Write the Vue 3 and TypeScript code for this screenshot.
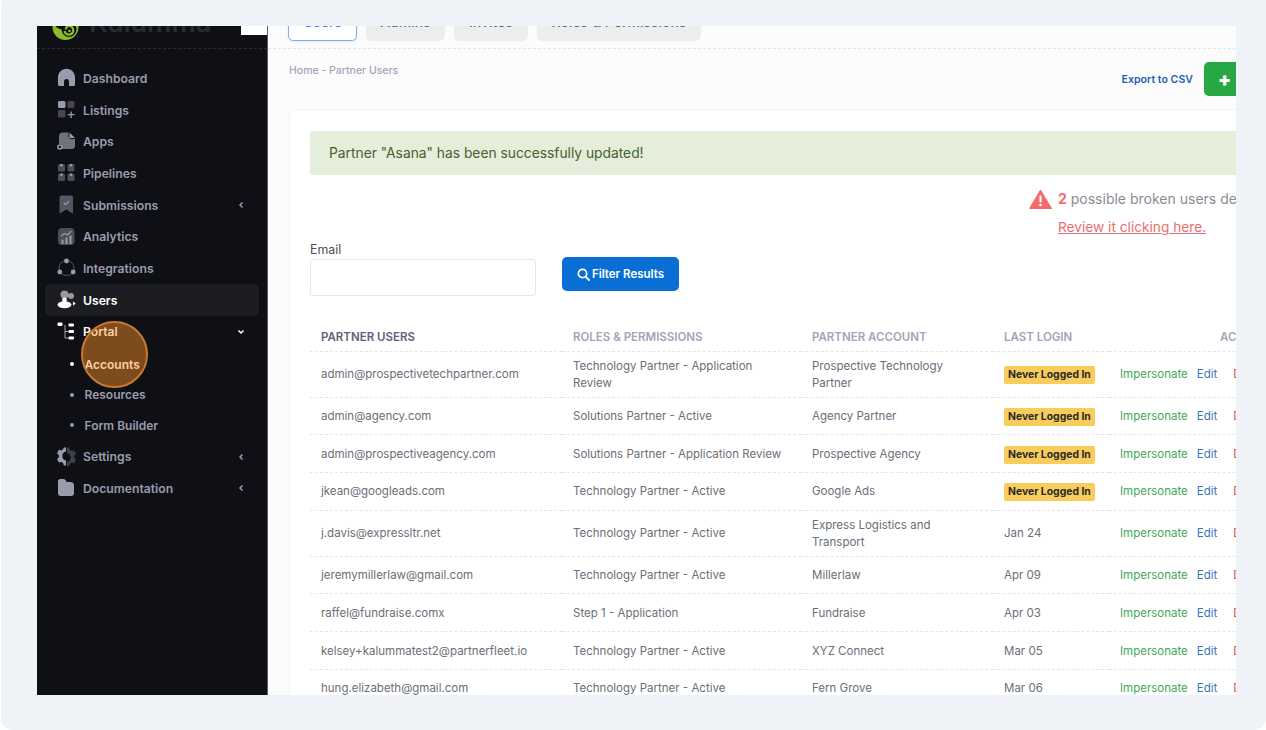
<script setup lang="ts">
interface NavItem { label: string; icon: string; chevron?: string; active?: boolean; white?: boolean; subs?: { label: string; white?: boolean }[] }
interface Row { email: string; role: string; account: string; login?: string }

const nav: NavItem[] = [
  { label: 'Dashboard', icon: 'home' },
  { label: 'Listings', icon: 'listings' },
  { label: 'Apps', icon: 'apps' },
  { label: 'Pipelines', icon: 'pipelines' },
  { label: 'Submissions', icon: 'submissions', chevron: 'left' },
  { label: 'Analytics', icon: 'analytics' },
  { label: 'Integrations', icon: 'integrations' },
  { label: 'Users', icon: 'users', active: true, white: true },
  { label: 'Portal', icon: 'portal', chevron: 'down', white: true, subs: [
    { label: 'Accounts', white: true }, { label: 'Resources' }, { label: 'Form Builder' } ] },
  { label: 'Settings', icon: 'settings', chevron: 'left' },
  { label: 'Documentation', icon: 'folder', chevron: 'left' },
]

const rows: Row[] = [
  { email: 'admin@prospectivetechpartner.com', role: 'Technology Partner - Application Review', account: 'Prospective Technology Partner' },
  { email: 'admin@agency.com', role: 'Solutions Partner - Active', account: 'Agency Partner' },
  { email: 'admin@prospectiveagency.com', role: 'Solutions Partner - Application Review', account: 'Prospective Agency' },
  { email: 'jkean@googleads.com', role: 'Technology Partner - Active', account: 'Google Ads' },
  { email: 'j.davis@expressltr.net', role: 'Technology Partner - Active', account: 'Express Logistics and Transport', login: 'Jan 24' },
  { email: 'jeremymillerlaw@gmail.com', role: 'Technology Partner - Active', account: 'Millerlaw', login: 'Apr 09' },
  { email: 'raffel@fundraise.comx', role: 'Step 1 - Application', account: 'Fundraise', login: 'Apr 03' },
  { email: 'kelsey+kalummatest2@partnerfleet.io', role: 'Technology Partner - Active', account: 'XYZ Connect', login: 'Mar 05' },
  { email: 'hung.elizabeth@gmail.com', role: 'Technology Partner - Active', account: 'Fern Grove', login: 'Mar 06' },
]
</script>

<template>
  <div class="page">
    <div class="frame">
      <aside class="sidebar">
        <div class="brand">
          <svg class="logo" width="27" height="27" viewBox="0 0 27 27">
            <circle cx="13.500" cy="13" r="13" fill="#8dbb2c" />
            <circle cx="17" cy="15.500" r="7.500" fill="#0e1015" />
            <path d="M4 9c2 4 5 5 9 4" fill="none" stroke="#0e1015" stroke-width="4" />
            <path d="M12.500 17a4.500 4.500 0 0 0 8.500 1c1-3-1-6-4-6-2 0-3.500 2-3 3.500" fill="none" stroke="#8dbb2c" stroke-width="2.200" />
            <circle cx="17.500" cy="17" r="1.300" fill="#8dbb2c" />
          </svg>
          <span class="brand-name">Kalumma</span>
          <span class="toggle"></span>
        </div>
        <nav class="nav">
          <template v-for="item in nav" :key="item.label">
            <div class="item" :class="{ active: item.active, white: item.white }">
              <svg class="icon" width="20" height="20" viewBox="0 0 20 20" fill="currentColor">
                <template v-if="item.icon === 'home'">
                  <path d="M1 16.500V9.500C1 4.500 4.800.8 9.500.8S18 4.500 18 9.500v7a1.500 1.500 0 0 1-1.500 1.500H12v-4.500a2.500 2.500 0 0 0-5 0V18H2.500A1.500 1.500 0 0 1 1 16.500z" />
                </template>
                <template v-else-if="item.icon === 'listings'">
                  <rect x="1" y="1" width="7.500" height="7" rx="1.500" />
                  <rect x="10.500" y="1" width="7" height="7" rx="1.500" opacity=".4" />
                  <rect x="1" y="10" width="7.500" height="7.500" rx="1.500" opacity=".4" />
                  <path d="M13.500 11.500h1.300v2.500h2.700v1.300h-2.700V18h-1.300v-2.700h-2.700V14h2.700z" />
                </template>
                <template v-else-if="item.icon === 'apps'">
                  <path d="M2 4.500A4 4 0 0 1 6 .5h5.500v3.500a3 3 0 0 0 3 3H18v7a3 3 0 0 1-3 3H5V13A3.500 3.500 0 0 0 2 12z" opacity=".7" />
                  <path d="M12.500.5L18 6h-5.500z" />
                  <circle cx="2.800" cy="15" r="2" fill="none" stroke="currentColor" stroke-width="1.500" />
                </template>
                <template v-else-if="item.icon === 'pipelines'">
                  <rect x="1" y="1" width="7" height="7.500" rx="1.500" opacity=".45" />
                  <rect x="10.500" y="1" width="7" height="7.500" rx="1.500" opacity=".45" />
                  <rect x="1" y="10.500" width="7" height="7.500" rx="1.500" opacity=".45" />
                  <rect x="10.500" y="10.500" width="7" height="7.500" rx="1.500" opacity=".45" />
                  <rect x="3.200" y="1" width="2.600" height="2.600" rx="1" /><rect x="12.700" y="1" width="2.600" height="2.600" rx="1" />
                  <rect x="3.200" y="10.500" width="2.600" height="2.600" rx="1" /><rect x="12.700" y="10.500" width="2.600" height="2.600" rx="1" />
                </template>
                <template v-else-if="item.icon === 'submissions'">
                  <path d="M2.500 2.500A2 2 0 0 1 4.500.5H14a2 2 0 0 1 2 2V17.500a.8.8 0 0 1-1.300.6L9.300 14.500 3.800 18.100a.8.8 0 0 1-1.300-.6z" opacity=".5" />
                  <path d="M7 8l1.600 1.600 3-3.100" fill="none" stroke="currentColor" stroke-width="1.200" stroke-linecap="round" />
                </template>
                <template v-else-if="item.icon === 'analytics'">
                  <rect x="1" y="1" width="16.500" height="17" rx="4" opacity=".45" />
                  <rect x="4.500" y="12.500" width="2" height="4.500" rx=".6" /><rect x="8.500" y="10.500" width="2" height="6.500" rx=".6" /><rect x="12.500" y="8.500" width="2" height="8.500" rx=".6" />
                  <path d="M4 9l3.500-2.500 3 1.500L14.500 4" fill="none" stroke="currentColor" stroke-width="1.100" />
                </template>
                <template v-else-if="item.icon === 'integrations'">
                  <circle cx="9.500" cy="10" r="7.500" fill="none" stroke="currentColor" stroke-width=".8" opacity=".6" />
                  <circle cx="9.500" cy="3" r="2.400" /><circle cx="2.800" cy="14" r="2.400" /><circle cx="16.200" cy="14" r="2.400" />
                </template>
                <template v-else-if="item.icon === 'users'">
                  <circle cx="7.500" cy="4.500" r="4" opacity=".55" /><circle cx="14" cy="6" r="3" opacity=".55" />
                  <ellipse cx="7.500" cy="14.800" rx="7" ry="3.500" />
                  <circle cx="7.500" cy="10" r="2.400" />
                  <path d="M16 11.300l2.600 2.200-2.600 2.200z" />
                </template>
                <template v-else-if="item.icon === 'portal'">
                  <rect x="0.500" y="0.500" width="5" height="3.500" rx="1" />
                  <rect x="11.500" y="1.500" width="5.500" height="3" rx="1" />
                  <rect x="11.500" y="8" width="5.500" height="3" rx="1" />
                  <rect x="11.500" y="14.500" width="5.500" height="3" rx="1" />
                  <path d="M8 3v13h3.500M8 9.500h3.500" fill="none" stroke="currentColor" stroke-width="1" opacity=".6" />
                </template>
                <template v-else-if="item.icon === 'settings'">
                  <path d="M10 .5h2.300l.6 2.400 2 1.200 2.300-.7 1.800 3.600-1.800 1.600v2.400l1.800 1.600-1.800 3.600-2.300-.7-2 1.200-.6 2.400H10v-4.100a4.600 4.600 0 0 0 0-9z" opacity=".35" />
                  <path d="M6.750.5H9v4.100a4.600 4.600 0 0 0 0 9V18.500H6.750l-.6-2.400-2-1.200-2.300.7-1.800-3.600 1.800-1.600V8l-1.800-1.600 1.800-3.600 2.300.7 2-1.200z" />
                </template>
                <template v-else>
                  <path d="M1 3.500A2.500 2.500 0 0 1 3.500 1h3c.9 0 1.500.4 2 1.100L9.800 4h3.700A3.500 3.500 0 0 1 17 7.500V15a3 3 0 0 1-3 3H4a3 3 0 0 1-3-3z" />
                </template>
              </svg>
              <span class="label">{{ item.label }}</span>
              <svg v-if="item.chevron" class="chev" :class="item.chevron" width="8" height="8" viewBox="0 0 8 8">
                <path d="M5.500 1.500L3 4l2.500 2.500" fill="none" stroke="currentColor" stroke-width="1.500" />
              </svg>
            </div>
            <div v-if="item.subs" class="subs">
              <div v-for="s in item.subs" :key="s.label" class="sub" :class="{ white: s.white }">
                <span class="dot"></span><span>{{ s.label }}</span>
              </div>
            </div>
          </template>
        </nav>
        <div class="spot"></div>
      </aside>

      <main class="main">
        <div class="tabs">
          <span class="tab on">Users</span>
          <span class="tab t-admins">Admins</span>
          <span class="tab t-invites">Invites</span>
          <span class="tab t-roles">Roles &amp; Permissions</span>
        </div>
        <div class="toolbar">
          <span class="crumb">Home - Partner Users</span>
          <div class="tools">
            <span class="export">Export to CSV</span>
            <span class="new"><b>+</b> New User</span>
          </div>
        </div>

        <section class="card">
          <div class="alert">Partner "Asana" has been successfully updated!</div>

          <div class="broken">
            <div class="broken-line">
              <svg width="23" height="20" viewBox="0 0 23 20">
                <path d="M11.500 1L22.500 19.500H.5z" fill="#f26c6c" stroke="#f26c6c" stroke-linejoin="round" />
                <rect x="10.400" y="6.500" width="2.200" height="7" rx="1" fill="#fff" />
                <circle cx="11.500" cy="16" r="1.300" fill="#fff" />
              </svg>
              <span><b>2</b> possible broken users detected.</span>
            </div>
            <a class="review">Review it clicking here.</a>
          </div>

          <div class="filter">
            <div class="field">
              <label>Email</label>
              <div class="input"></div>
            </div>
            <span class="btn">
              <svg width="13" height="13" viewBox="0 0 13 13"><circle cx="5.500" cy="5.500" r="4.200" fill="none" stroke="#fff" stroke-width="1.700" /><path d="M8.600 8.600L12 12" stroke="#fff" stroke-width="1.900" stroke-linecap="round" /></svg>
              Filter Results
            </span>
          </div>

          <table class="table">
            <colgroup><col class="c1" /><col class="c2" /><col class="c3" /><col class="c4" /><col class="c5" /></colgroup>
            <thead>
              <tr>
                <th class="first">PARTNER USERS</th>
                <th>ROLES &amp; PERMISSIONS</th>
                <th>PARTNER ACCOUNT</th>
                <th>LAST LOGIN</th>
                <th class="act-h">ACTIONS</th>
              </tr>
            </thead>
            <tbody>
              <tr v-for="r in rows" :key="r.email">
                <td>{{ r.email }}</td>
                <td>{{ r.role }}</td>
                <td>{{ r.account }}</td>
                <td><span v-if="!r.login" class="badge">Never Logged In</span><template v-else>{{ r.login }}</template></td>
                <td class="acts"><a class="imp">Impersonate</a><a class="edit">Edit</a><a class="del">Delete</a></td>
              </tr>
            </tbody>
          </table>
        </section>
      </main>
    </div>
  </div>
</template>

<style>
html, body { margin: 0; background: #fff; }
</style>

<style scoped>
* { box-sizing: border-box; }
.page {
  width: 1265px; height: 730px; margin: 0 0 0 1px; padding: 26px 29px 35px 36px;
  background: #eff3f8; border-radius: 2px 0 12px 12px; overflow: hidden;
  font-family: Inter, "Liberation Sans", sans-serif;
}
.frame { display: flex; height: 669px; width: 1199px; overflow: hidden; background: #fcfcfc; position: relative; }
.sidebar { width: 231px; flex: none; background: #0e1015; position: relative; border-right: 1px solid #5c5e63; }
.brand { height: 23px; border-bottom: 1px dashed #2b2c33; display: flex; align-items: flex-start; padding-left: 15px; position: relative; }
.logo { margin-top: -12px; flex: none; }
.brand-name { font-size: 27px; line-height: 28px; font-weight: 600; color: #2a2c33; margin: -17px 0 0 10px; height: 28px; }
.toggle { width: 26px; height: 9px; background: #fff; margin-left: auto; }
.nav { padding: 13.500px 8px 0; display: flex; flex-direction: column; }
.item { height: 31.700px; display: flex; align-items: center; padding-left: 12px; padding-right: 14px; color: #9a9cae; font-size: 12.200px; font-weight: 600; border-radius: 5px; }
.item.white, .sub.white { color: #fff; }
.item.active { background: #1c1d22; }
.icon { flex: none; margin-right: 6px; }
.label { flex: 1; }
.chev { flex: none; color: #9a9cae; }
.chev.down { color: #fff; transform: rotate(-90deg); }
.subs { padding-top: 1.500px; }
.sub { height: 30.500px; display: flex; align-items: center; padding-left: 25px; color: #9a9cae; font-size: 12px; font-weight: 600; }
.dot { width: 4px; height: 4px; border-radius: 50%; background: currentColor; margin-right: 10.500px; flex: none; }
.spot { position: absolute; left: 44px; top: 295px; width: 67px; height: 67px; border-radius: 50%; background: rgba(255, 146, 42, .46); border: 2px solid #c77a2e; }

.main { flex: 1; min-width: 0; }
.tabs { display: flex; gap: 9px; padding: 0 0 7px 20px; margin-top: -23px; border-bottom: 1px dashed #e4e6ef; box-sizing: content-box; height: 38px; }
.tab { height: 38px; padding-bottom: 1px; display: flex; align-items: center; justify-content: center; font-size: 14px; font-weight: 500; color: #5e6278; background: #eeeded; border-radius: 5px; }
.tab.on { width: 69px; background: #fff; color: #1b84ff; border: 1px solid #7fb0e8; box-shadow: 0 1px 3px rgba(27, 132, 255, .15); }
.t-admins { width: 79px; }
.t-invites { width: 74px; }
.t-roles { width: 164px; }
.toolbar { width: 1028px; height: 60px; padding: 13px 0 0 21px; display: flex; justify-content: space-between; align-items: flex-start; }
.crumb { font-size: 10.500px; line-height: 16px; font-weight: 500; color: #a1a5b7; margin-top: 1px; }
.tools { display: flex; align-items: center; gap: 11px; }
.export { font-size: 10.600px; font-weight: 600; color: #1f5fb4; }
.new { width: 92px; height: 34px; background: #28a745; border-radius: 5px; color: #fff; font-size: 12px; font-weight: 600; display: flex; align-items: center; padding-left: 14px; gap: 5px; white-space: nowrap; }
.new b { font-size: 19px; }
.card { width: 1060px; margin-left: 21px; background: #fff; border: 1px solid #f2f2f4; border-radius: 6px; padding: 21px 20px 0; }
.alert { height: 44px; background: #e4eedb; display: flex; align-items: center; padding: 0 0 1px 19px; font-size: 13.800px; color: #43622f; border-radius: 2px; }
.broken { margin-left: 719px; padding-top: 13px; height: 68px; white-space: nowrap; font-size: 14px; color: #8a8c94; }
.broken-line { display: flex; align-items: center; gap: 6px; height: 20px; }
.broken-line svg { margin-top: 1px; }
.broken-line b { color: #ef6f6f; font-weight: 700; }
.review { display: block; margin: 9px 0 0 29px; font-size: 13.700px; line-height: 20px; color: #e76f6f; text-decoration: underline; }
.filter { display: flex; align-items: flex-start; height: 82px; margin-top: -1px; }
.field { width: 226px; }
.field label { display: block; font-size: 12.400px; line-height: 16px; color: #4c4f58; margin-bottom: 1px; }
.input { height: 37px; border: 1px solid #e4e6ef; border-radius: 3px; background: #fff; }
.btn { margin: 15px 0 0 26px; width: 117px; height: 34px; border-radius: 5px; background: #0a6fd4; color: #fff; font-size: 11.500px; font-weight: 600; display: flex; align-items: center; justify-content: center; gap: 2px; }
.table { border-collapse: collapse; table-layout: fixed; width: 980px; font-size: 11.500px; color: #6c6e78; margin-top: -1px; }
.c1 { width: 252px; } .c2 { width: 239px; } .c3 { width: 192px; } .c4 { width: 116px; } .c5 { width: 181px; }
th { text-align: left; font-weight: 600; color: #a1a5b7; height: 28px; padding: 0 11px; border-bottom: 1px dashed #e4e6ef; white-space: nowrap; }
th.first { color: #5e6278; }
th.act-h { padding-left: 111px; }
td { padding: 6px 11px 4px; height: 37.700px; line-height: 17.500px; border-bottom: 1px dashed #e4e6ef; }
.badge { display: inline-block; height: 18px; line-height: 18px; padding: 0 4px; background: #f8cd5c; border-radius: 2px; color: #2b2a26; font-size: 10.400px; font-weight: 700; white-space: nowrap; vertical-align: middle; }
.acts { white-space: nowrap; }
.imp { color: #44a85a; }
.edit { color: #3f74b9; margin-left: 9px; }
.del { color: #d9534f; margin-left: 16px; }
</style>
